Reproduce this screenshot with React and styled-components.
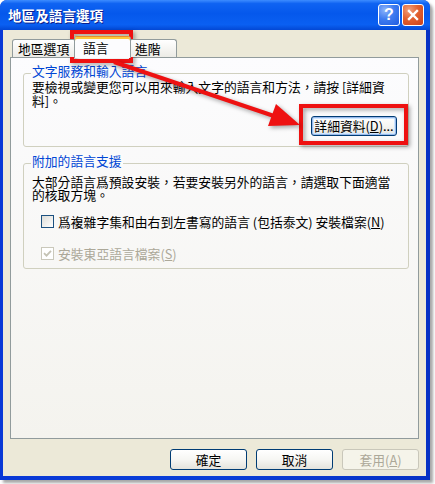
import React from "react";
import styled, { createGlobalStyle } from "styled-components";

const GlobalStyle = createGlobalStyle`
  html, body {
    margin: 0;
    padding: 0;
    background: #fff;
  }
  body {
    font-family: "Noto Sans CJK TC", "Noto Sans", sans-serif;
    font-size: 12.8px;
    color: #000;
  }
`;

const Stage = styled.div`
  position: relative;
  width: 435px;
  height: 484px;
  overflow: hidden;
`;

const Window = styled.div`
  width: 430px;
  height: 480px;
  display: flex;
  flex-direction: column;
  border-radius: 7px 7px 0 0;
  background: linear-gradient(90deg, #0838d6, #0a3fd8 50%, #0631c4);
  box-shadow: 3px 3px 3px rgba(0, 0, 0, 0.35);
`;

const TitleBar = styled.div`
  height: 30px;
  flex: none;
  display: flex;
  align-items: center;
  justify-content: space-between;
  padding: 0 6px 0 8px;
  border-radius: 7px 7px 0 0;
  background: linear-gradient(
    180deg,
    #3d8cff 0%,
    #0f63f2 12%,
    #0558ec 45%,
    #0a60f2 82%,
    #0348d4 100%
  );
`;

const Caption = styled.div`
  color: #fff;
  font-weight: 700;
  font-size: 13.5px;
  letter-spacing: 0.1px;
  text-shadow: 1px 1px 0 #0c1f8c;
`;

const CaptionButtons = styled.div`
  display: flex;
  gap: 2px;
`;

const CaptionButton = styled.div`
  width: 22px;
  height: 22px;
  box-sizing: border-box;
  border: 1px solid #fff;
  border-radius: 3px;
  display: flex;
  align-items: center;
  justify-content: center;
  color: #fff;
  font-family: "Liberation Sans", sans-serif;
  font-weight: 700;
  font-size: 16px;
  background: ${(p) =>
    p.$close
      ? "radial-gradient(circle at 30% 25%, #f1a07d 0%, #e2612f 45%, #c9401a 100%)"
      : "radial-gradient(circle at 30% 25%, #8db4fa 0%, #3f7cf0 45%, #1f5ce0 100%)"};
`;

const Body = styled.div`
  flex: 1;
  margin: 0 4px 4px 3px;
  padding: 7px 7px 0 7px;
  background: #ece9d8;
  display: flex;
  flex-direction: column;
`;

const TabStrip = styled.div`
  height: 20px;
  display: flex;
  align-items: flex-end;
  padding-left: 2px;
  position: relative;
  z-index: 1;
`;

const Tab = styled.div`
  box-sizing: border-box;
  width: ${(p) => p.$w}px;
  height: ${(p) => (p.$active ? 22 : 18)}px;
  margin: ${(p) => (p.$active ? "0 -2px -1px -2px" : "0")};
  padding-left: ${(p) => (p.$active ? 8 : 5)}px;
  display: flex;
  align-items: center;
  border: 1px solid #919b9c;
  border-bottom: none;
  border-radius: 3px 3px 0 0;
  position: relative;
  z-index: ${(p) => (p.$active ? 2 : 0)};
  background: ${(p) =>
    p.$active ? "#fcfcfe" : "linear-gradient(180deg, #ffffff, #ecebe6)"};
  ${(p) =>
    p.$active &&
    `border-top-color: #e68b2c; box-shadow: inset 0 2px 0 #ffc83c;`}
  line-height: 14px;
`;

const Panel = styled.div`
  height: 382px;
  box-sizing: border-box;
  border: 1px solid #919b9c;
  padding: 15px 9px 0 12px;
  background: linear-gradient(180deg, #fcfcfe, #f4f3ee);
  display: flex;
  flex-direction: column;
  gap: 16px;
`;

const Group = styled.div`
  border: 1px solid #d0d0bf;
  border-radius: 3px;
  padding: 0 10px ${(p) => p.$bottom}px 8px;
  display: flex;
  flex-direction: column;
`;

const GroupTitle = styled.div`
  align-self: flex-start;
  margin: -10px 0 0 -1px;
  padding: 0 1px;
  line-height: 14px;
  color: #0046d5;
  background: #fbfbfb;
`;

const Text = styled.div`
  margin-top: ${(p) => p.$top}px;
  line-height: ${(p) => p.$lh}px;
  white-space: nowrap;
`;

const Button = styled.button`
  box-sizing: border-box;
  width: ${(p) => p.$w}px;
  height: ${(p) => p.$h || 21}px;
  padding: 0;
  border: 1px solid ${(p) => (p.disabled ? "#c9c7ba" : "#003c74")};
  border-radius: 3px;
  font-family: inherit;
  font-size: 12.8px;
  line-height: 14px;
  color: ${(p) => (p.disabled ? "#aca899" : "#000")};
  background: ${(p) =>
    p.disabled
      ? "#f5f4ea"
      : "linear-gradient(180deg, #ffffff 0%, #f6f6f3 50%, #e4e3dc 100%)"};
  box-shadow: ${(p) =>
    p.$focus ? "inset 0 0 0 1px #98b8ea, inset 0 0 0 2px #cee7ff" : "none"};
`;

const DetailRow = styled.div`
  display: flex;
  justify-content: flex-end;
  margin-top: 8px;
  padding-right: 1px;
`;

const CheckRow = styled.label`
  display: flex;
  align-items: center;
  gap: 4px;
  height: 16px;
  margin: ${(p) => p.$top}px 0 0 9px;
  color: ${(p) => (p.$disabled ? "#aca899" : "#000")};
  white-space: nowrap;
`;

const Box = styled.span`
  width: 13px;
  height: 13px;
  box-sizing: border-box;
  flex: none;
  border: 1px solid ${(p) => (p.$disabled ? "#cac8bb" : "#1c5180")};
  background: ${(p) =>
    p.$disabled ? "#fff" : "linear-gradient(135deg, #dcdcd7, #ffffff)"};
  display: flex;
  align-items: center;
  justify-content: center;
`;

const Footer = styled.div`
  margin-top: 10px;
  display: flex;
  justify-content: flex-end;
  gap: 9px;
`;

const RedFrame = styled.div`
  position: absolute;
  left: ${(p) => p.$x}px;
  top: ${(p) => p.$y}px;
  width: ${(p) => p.$w}px;
  height: ${(p) => p.$h}px;
  box-sizing: border-box;
  border: 4px solid #ee1111;
  filter: drop-shadow(2px 2px 2px rgba(0, 0, 0, 0.35));
  pointer-events: none;
`;

const Overlay = styled.svg`
  position: absolute;
  left: 0;
  top: 0;
  pointer-events: none;
  filter: drop-shadow(2px 2px 2px rgba(0, 0, 0, 0.35));
`;

function Check({ checked, disabled }) {
  return (
    <Box $disabled={disabled}>
      {checked && (
        <svg width="9" height="9" viewBox="0 0 9 9">
          <path
            d="M1 4.2 L3.5 6.7 L8 1.8"
            fill="none"
            stroke={disabled ? "#c4c2b4" : "#21a121"}
            strokeWidth="1.8"
          />
        </svg>
      )}
    </Box>
  );
}

export default function App() {
  return (
    <Stage>
      <GlobalStyle />
      <Window>
        <TitleBar>
          <Caption>地區及語言選項</Caption>
          <CaptionButtons>
            <CaptionButton>?</CaptionButton>
            <CaptionButton $close>
              <svg width="12" height="12" viewBox="0 0 12 12">
                <path d="M2 2 L10 10 M10 2 L2 10" stroke="#fff" strokeWidth="2.4" strokeLinecap="square" />
              </svg>
            </CaptionButton>
          </CaptionButtons>
        </TitleBar>
        <Body>
          <TabStrip>
            <Tab $w={64}>地區選項</Tab>
            <Tab $w={57} $active>語言</Tab>
            <Tab $w={48}>進階</Tab>
          </TabStrip>
          <Panel>
            <Group $bottom={10}>
              <GroupTitle>文字服務和輸入語言</GroupTitle>
              <Text $top={2} $lh={14}>
                要檢視或變更您可以用來輸入文字的語言和方法，請按 [詳細資
                <br />
                料]。
              </Text>
              <DetailRow>
                <Button $w={86} $h={20} $focus>
                  詳細資料(<u>D</u>)...
                </Button>
              </DetailRow>
            </Group>
            <Group $bottom={7}>
              <GroupTitle>附加的語言支援</GroupTitle>
              <Text $top={8} $lh={12.5}>
                大部分語言爲預設安裝，若要安裝另外的語言，請選取下面適當
                <br />
                的核取方塊。
              </Text>
              <CheckRow $top={12}>
                <Check />
                <span>
                  爲複雜字集和由右到左書寫的語言 (包括泰文) 安裝檔案(<u>N</u>)
                </span>
              </CheckRow>
              <CheckRow $top={16} $disabled>
                <Check checked disabled />
                <span>
                  安裝東亞語言檔案(<u>S</u>)
                </span>
              </CheckRow>
            </Group>
          </Panel>
          <Footer>
            <Button $w={77}>確定</Button>
            <Button $w={77}>取消</Button>
            <Button $w={77} disabled>
              套用(<u>A</u>)
            </Button>
          </Footer>
        </Body>
      </Window>

      <RedFrame $x={70} $y={30} $w={63} $h={33} />
      <RedFrame $x={299} $y={104} $w={109} $h={41} />
      <Overlay width="435" height="484" viewBox="0 0 435 484">
        <line x1="114" y1="62" x2="274" y2="116" stroke="#ee1111" strokeWidth="4" />
        <polygon points="300,125 268,126 276,104" fill="#ee1111" />
      </Overlay>
    </Stage>
  );
}
